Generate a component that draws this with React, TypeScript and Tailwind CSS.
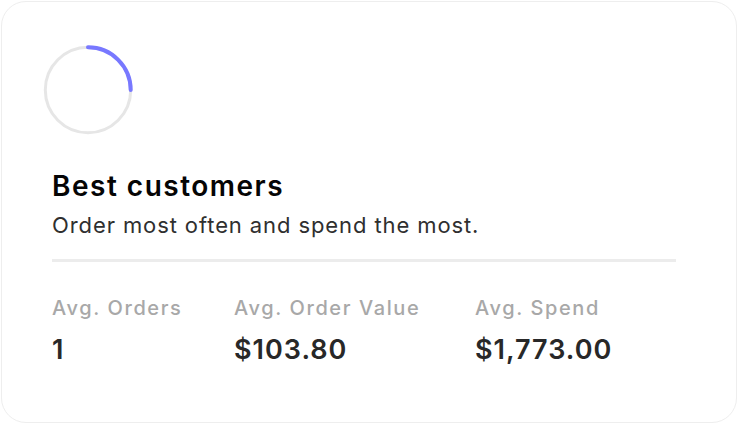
export default function App() {
  const stats = [
    { label: 'Avg. Orders', value: '1', width: 'w-[182px]' },
    { label: 'Avg. Order Value', value: '$103.80', width: 'w-[241px]' },
    { label: 'Avg. Spend', value: '$1,773.00', width: 'w-[200px]' },
  ];

  const r = 42.7;
  const c = 2 * Math.PI * r;

  return (
    <div className="w-[738px] h-[425px] bg-white p-px font-['Inter',sans-serif]">
      <div className="h-[422px] w-[736px] rounded-[25px] border border-[#eeeeee] bg-white pl-[50px] pt-[42px]">
        {/* progress ring */}
        <svg width="92" height="92" viewBox="0 0 92 92" className="block -ml-[10px]">
          <circle cx="46" cy="46" r={r} fill="none" stroke="#e6e6e6" strokeWidth="3" />
          <circle
            cx="46"
            cy="46"
            r={r}
            fill="none"
            stroke="#7878ff"
            strokeWidth="4"
            strokeLinecap="round"
            strokeDasharray={`${c * 0.25} ${c}`}
            transform="rotate(-90 46 46)"
          />
        </svg>

        <h2 className="mt-[34px] text-[28px] leading-[32px] font-semibold tracking-[1.5px] text-[#050505]">
          Best customers
        </h2>
        <p className="mt-[10px] text-[22px] leading-[26px] tracking-[0.9px] text-[#2f2f2f]">
          Order most often and spend the most.
        </p>

        <div className="mt-[21px] h-[3px] w-[624px] bg-[#ececec]" />

        <div className="mt-[34px] flex">
          {stats.map((s) => (
            <div key={s.label} className={s.width}>
              <div className="text-[20px] leading-[24px] font-medium tracking-[1.6px] text-[#a8a8a8]">
                {s.label}
              </div>
              <div className="mt-[14px] text-[27px] leading-[32px] font-semibold tracking-[1px] text-[#282828]">
                {s.value}
              </div>
            </div>
          ))}
        </div>
      </div>
    </div>
  );
}
